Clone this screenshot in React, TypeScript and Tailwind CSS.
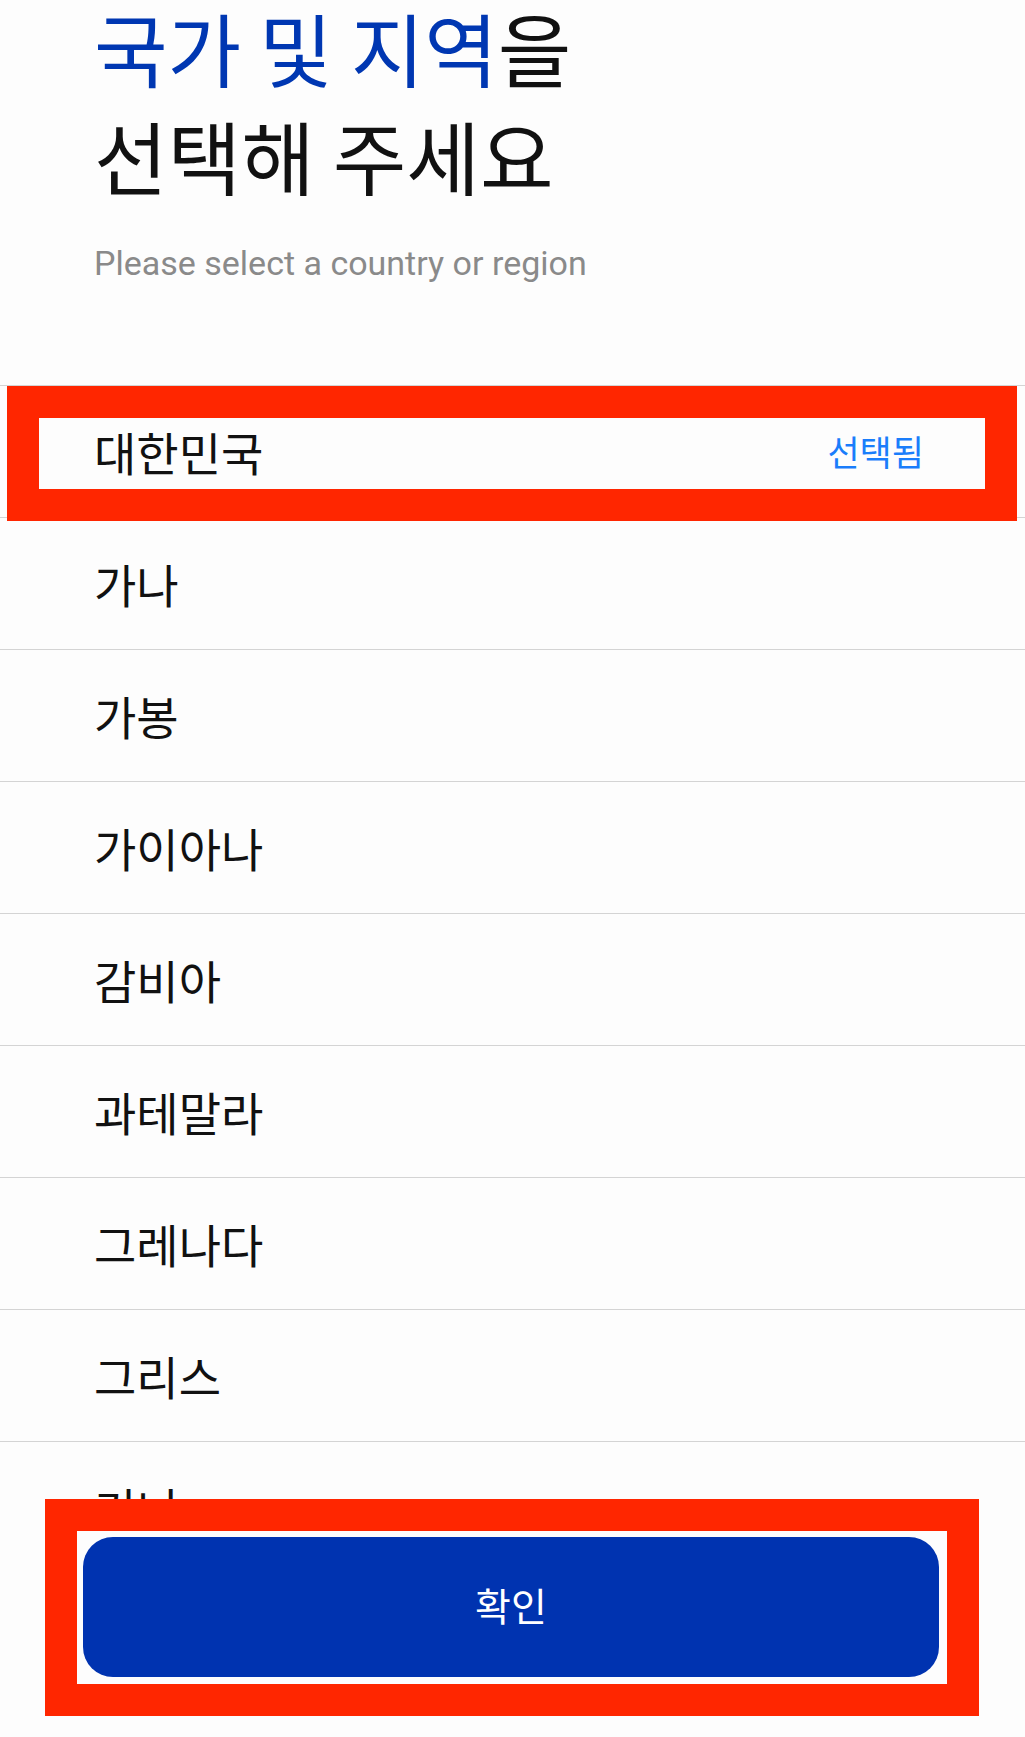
import React from "react";

const countries = [
  "가나",
  "가봉",
  "가이아나",
  "감비아",
  "과테말라",
  "그레나다",
  "그리스",
  "기니",
  "기니비사우",
];

export default function App() {
  return (
    <div className="w-[1025px] h-[1737px] flex flex-col overflow-hidden bg-[#fdfdfd] font-['Noto_Sans_CJK_KR',sans-serif]">
      {/* Header */}
      <div className="h-[385px] shrink-0 flex flex-col pl-[94px]">
        <h1 className="-mt-[8px] text-[80px] leading-[108px] font-normal text-[#111111] whitespace-nowrap">
          <span className="text-[#0037b2]">국가 및 지역</span>을
          <br />
          선택해 주세요
        </h1>
        <p className="mt-[36px] text-[34px] leading-[39px] text-[#8a8a8a] font-['Roboto',sans-serif]">
          Please select a country or region
        </p>
      </div>

      {/* List */}
      <div className="flex-1 overflow-hidden">
        <div className="relative h-[132px] border-t border-[#d4d4d4] flex items-center justify-between pl-[94px] pr-[101px]">
          <span className="text-[46px] text-[#111111]">대한민국</span>
          <span className="text-[35px] text-[#1a7dfb]">선택됨</span>
          <div className="pointer-events-none absolute left-[7px] top-0 w-[1010px] h-[135px] border-[32px] border-[#ff2600] z-10" />
        </div>
        {countries.map((c) => (
          <div
            key={c}
            className="h-[132px] border-t border-[#d4d4d4] flex items-center pl-[94px]"
          >
            <span className="text-[46px] text-[#111111]">{c}</span>
          </div>
        ))}
      </div>

      {/* Footer */}
      <div className="relative h-[238px] shrink-0 bg-[#fdfdfd] flex flex-col">
        <button className="mt-[38px] ml-[83px] mr-[86px] h-[140px] rounded-[30px] bg-[#0033b0] text-white text-[39px] flex items-center justify-center pb-[6px]">
          확인
        </button>
        <div className="pointer-events-none absolute left-[45px] top-0 w-[934px] h-[217px] border-[32px] border-[#ff2600]" />
      </div>
    </div>
  );
}
